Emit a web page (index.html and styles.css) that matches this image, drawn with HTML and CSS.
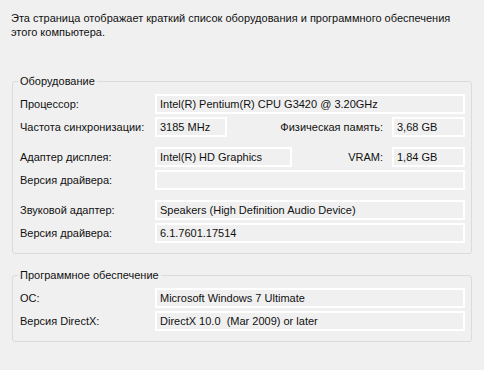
FILE: index.html
```html
<!DOCTYPE html>
<html lang="ru">
<head>
<meta charset="utf-8">
<title>Сведения о системе</title>
<link rel="stylesheet" href="styles.css">
</head>
<body>
<div class="page">
  <p class="intro">Эта страница отображает краткий список оборудования и программного обеспечения этого компьютера.</p>

  <fieldset class="group group-hw">
    <legend class="legend">Оборудование</legend>
    <div class="pair">
      <div class="row">
        <span class="label">Процессор:</span>
        <span class="box box-full">Intel(R) Pentium(R) CPU G3420 @ 3.20GHz</span>
      </div>
      <div class="row">
        <span class="label">Частота синхронизации:</span>
        <div class="split">
          <span class="box box-freq">3185 MHz</span>
          <span class="sublabel">Физическая память:</span>
          <span class="box box-small">3,68 GB</span>
        </div>
      </div>
    </div>
    <div class="pair">
      <div class="row">
        <span class="label">Адаптер дисплея:</span>
        <div class="split">
          <span class="box box-gpu">Intel(R) HD Graphics</span>
          <span class="sublabel">VRAM:</span>
          <span class="box box-small">1,84 GB</span>
        </div>
      </div>
      <div class="row">
        <span class="label">Версия драйвера:</span>
        <span class="box box-full"></span>
      </div>
    </div>
    <div class="pair">
      <div class="row">
        <span class="label">Звуковой адаптер:</span>
        <span class="box box-full">Speakers (High Definition Audio Device)</span>
      </div>
      <div class="row">
        <span class="label">Версия драйвера:</span>
        <span class="box box-full">6.1.7601.17514</span>
      </div>
    </div>
  </fieldset>

  <fieldset class="group group-sw">
    <legend class="legend">Программное обеспечение</legend>
    <div class="pair">
      <div class="row">
        <span class="label">ОС:</span>
        <span class="box box-full">Microsoft Windows 7 Ultimate</span>
      </div>
      <div class="row">
        <span class="label">Версия DirectX:</span>
        <span class="box box-full">DirectX 10.0&nbsp; (Mar 2009) or later</span>
      </div>
    </div>
  </fieldset>
</div>
</body>
</html>
```

FILE: styles.css
```css
html, body {
  margin: 0;
  padding: 0;
  background: #f0f0f0;
}

body {
  font-family: "Liberation Sans", Arial, sans-serif;
  font-size: 11px;
  color: #111;
}

.page {
  width: 484px;
  height: 370px;
  box-sizing: border-box;
  padding: 11px 12px 0 11px;
  display: flex;
  flex-direction: column;
}

.intro {
  margin: 0;
  line-height: 14px;
  width: 450px;
}

.group {
  margin: 0 0 0 1px;
  padding: 6px 6px 10px 7px;
  border: 1px solid #d9dcdf;
  border-radius: 3px;
  min-width: 0;
  display: flex;
  flex-direction: column;
  gap: 10px;
}

.group-hw {
  margin-top: 35px;
}

.group-sw {
  margin-top: 14px;
}

.legend {
  padding: 0 2px;
  margin-left: -2px;
  line-height: 14px;
}

.pair {
  display: flex;
  flex-direction: column;
  gap: 3px;
}

.row {
  display: flex;
  align-items: center;
  height: 20px;
}

.label {
  width: 135px;
  flex: none;
}

.box {
  box-sizing: border-box;
  height: 20px;
  border: 2px solid #ffffff;
  background: #f0f0f0;
  padding: 0 3px;
  line-height: 16px;
  white-space: nowrap;
  overflow: hidden;
}

.box-full {
  flex: 1;
}

.split {
  flex: 1;
  display: flex;
  align-items: center;
}

.box-freq {
  width: 72px;
  flex: none;
}

.box-gpu {
  width: 137px;
  flex: none;
}

.box-small {
  width: 73px;
  flex: none;
}

.sublabel {
  flex: 1;
  text-align: right;
  padding-right: 9px;
}
```
